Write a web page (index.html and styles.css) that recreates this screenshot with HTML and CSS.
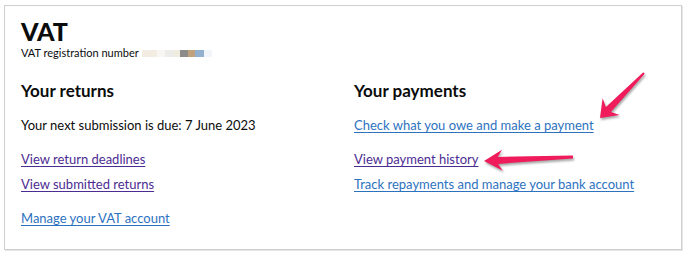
FILE: index.html
```html
<!DOCTYPE html>
<html lang="en">
<head>
  <meta charset="UTF-8">
  <title>VAT</title>
  <link rel="stylesheet" href="styles.css">
</head>
<body>

<div class="card">
  <h1 class="title">VAT</h1>
  <p class="vrn">VAT registration number
    <span class="redact">
      <span class="blk b1"></span><span class="blk b2"></span><span class="blk b3"></span><span class="blk b4"></span><span class="blk b5"></span><span class="blk b6"></span><span class="blk b7"></span><span class="blk b8"></span>
    </span>
  </p>

  <div class="columns">
    <div class="col">
      <h2>Your returns</h2>
      <p class="item first">Your next submission is due: 7 June 2023</p>
      <p class="item group"><a href="#" class="visited">View return deadlines</a></p>
      <p class="item"><a href="#" class="visited">View submitted returns</a></p>
      <p class="item group"><a href="#">Manage your VAT account</a></p>
    </div>
    <div class="col">
      <h2>Your payments</h2>
      <p class="item first"><a href="#">Check what you owe and make a payment</a></p>
      <p class="item group"><a href="#" class="visited">View payment history</a></p>
      <p class="item"><a href="#">Track repayments and manage your bank account</a></p>
    </div>
  </div>
</div>

<!-- annotation arrows drawn over the screenshot -->
<svg class="arrows" width="690" height="257" viewBox="0 0 690 257">
  <polygon points="600,118 619.7,114.9 610.9,111.9 644.7,73.7 643.3,72.3 605.9,107 602.6,98.2" />
  <polygon points="484,161 502.9,170.7 498.1,163.9 573.1,158.5 572.9,155.5 497.8,156.9 502,149.7" />
</svg>

</body>
</html>
```

FILE: styles.css
```css
body {
  margin: 0;
  background: #fff;
  font-family: Lato, "Liberation Sans", Arial, sans-serif;
  color: #0b0c0c;
  position: relative;
  width: 690px;
  height: 257px;
  overflow: hidden;
}

.card {
  box-sizing: border-box;
  width: 678px;
  margin: 5px 0 0 4px;
  padding: 11px 16px 21px 16px;
  border: 1px solid #cfcfcf;
  box-shadow: 1px 1px 0 #e4e4e4;
}

.title {
  margin: 0;
  font-size: 25px;
  line-height: 29px;
  font-weight: 900;
}

.vrn {
  margin: 0;
  font-size: 11px;
  line-height: 14px;
  display: flex;
  align-items: center;
  gap: 3px;
}

.redact {
  display: inline-flex;
  height: 7px;
  margin-top: 1px;
}

.blk {
  display: inline-block;
  height: 7px;
}

.b1 { width: 15px; background: #f2ece3; }
.b2 { width: 8px; background: #f7f6f3; }
.b3 { width: 9px; background: #ececea; }
.b4 { width: 6px; background: #f1ece0; }
.b5 { width: 8px; background: #8c8c8a; }
.b6 { width: 7px; background: #c0a27c; }
.b7 { width: 9px; background: #93b0cf; }
.b8 { width: 8px; background: #f1f5fa; }

.columns {
  display: grid;
  grid-template-columns: 311px 311px;
  column-gap: 22px;
  margin-top: 20px;
}

h2 {
  margin: 0;
  font-size: 17px;
  line-height: 22px;
  font-weight: bold;
}

.item {
  margin: 5px 0 0 0;
  font-size: 13px;
  line-height: 20px;
}

.item.first {
  margin-top: 13px;
}

.item.group {
  margin-top: 14px;
}

a {
  color: #2d72bf;
  text-decoration: underline;
  text-decoration-thickness: 1px;
  text-underline-offset: 2px;
}

a.visited {
  color: #4c2c92;
}

.arrows {
  position: absolute;
  left: 0;
  top: 0;
  pointer-events: none;
}

.arrows polygon {
  fill: #ef1b5b;
  filter: drop-shadow(1px 2px 1.2px rgba(0, 0, 0, 0.35));
}
```
